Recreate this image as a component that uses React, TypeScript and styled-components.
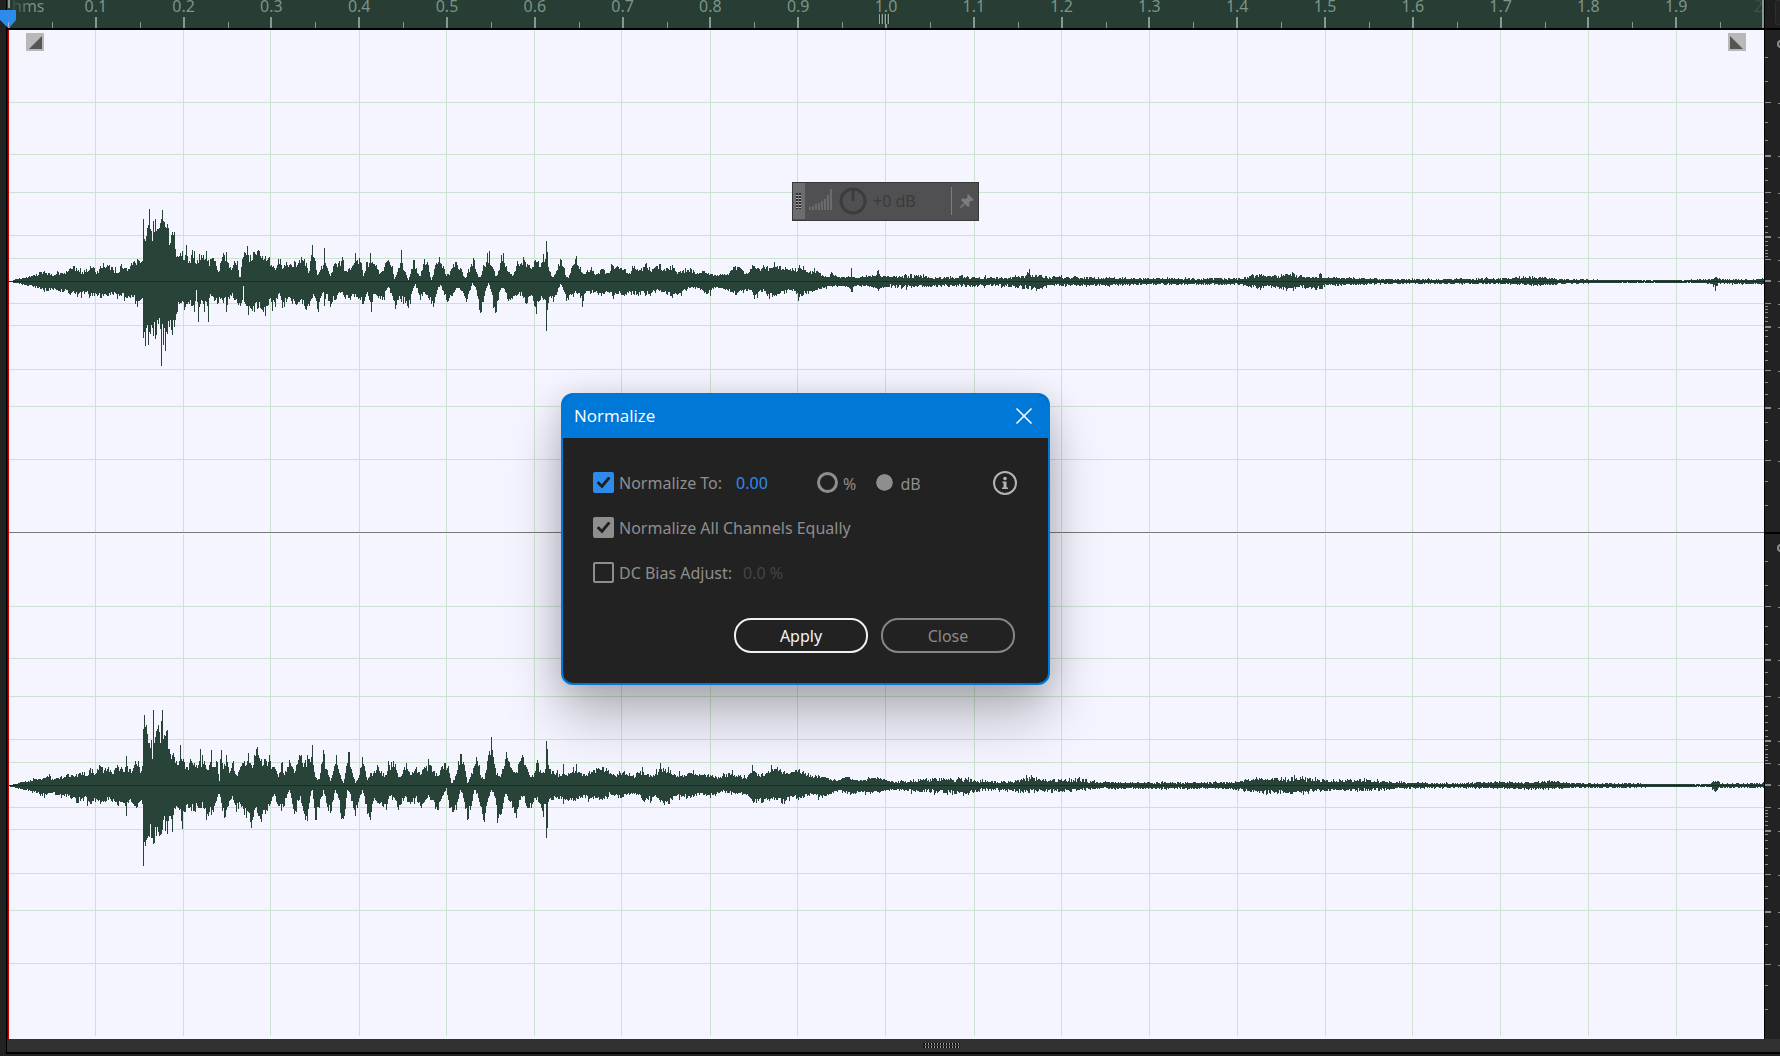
import React from "react";
import styled, { createGlobalStyle } from "styled-components";

const sans = `"Noto Sans", "Open Sans", sans-serif`;

const GlobalStyle = createGlobalStyle`
  *, *::before, *::after { box-sizing: border-box; }
  body { margin: 0; background: #222222; }
  button, input { font: inherit; margin: 0; padding: 0; }
`;

/* ---------- audio envelopes: "x:height" pairs, in pixels ---------- */

const parse = (s: string): number[][] =>
  s.trim().split(/[\s,]+/).map((p) => p.split(":").map(Number));

const leftUp = parse(`8:0,12:0,16:2,22:3,28:4,34:6,40:9,44:10,48:8,54:6,58:9,62:8,66:10,70:13,74:15,78:11,82:9,86:12,90:15,94:13,96:7,100:15,104:14,108:15,112:14,117:8,121:17,126:13,130:15,134:20,137:22,140:18,142:20,143:62,144:42,147:53,148:56,149:72,150:52,151:50,153:60,155:62,157:52,160:58,161:62,162:71,163:60,164:59,166:53,168:53,170:38,172:49,174:49,175:32,178:24,180:28,182:30,185:26,186:36,187:25,189:20,192:31,195:18,199:27,203:26,206:30,207:20,211:22,215:20,218:9,222:24,224:26,227:19,230:14,234:20,237:20,239:4,240:4,242:22,245:28,246:26,247:35,248:26,250:26,254:29,257:30,262:25,265:25,269:24,272:14,275:11,278:22,280:22,282:12,286:19,290:17,294:20,298:18,301:24,304:22,306:18,308:8,310:20,311:26,312:36,313:24,315:20,317:6,321:15,323:16,324:33,325:18,326:15,330:5,334:17,338:18,341:20,345:10,349:13,352:15,354:18,355:28,356:20,358:17,361:18,363:5,367:19,369:18,370:28,371:18,376:16,379:7,382:10,385:18,388:21,392:15,394:2,398:13,400:18,401:31,402:18,404:10,408:1,411:12,414:21,417:8,420:5,424:22,427:19,431:1,435:16,439:24,443:15,446:5,450:10,455:19,460:13,465:3,470:14,473:23,477:7,480:4,484:15,487:28,488:18,489:30,490:16,492:14,496:5,500:18,502:20,503:28,504:18,506:15,510:7,513:6,517:20,521:18,523:24,527:17,531:12,534:20,538:20,541:18,543:27,545:22,546:40,547:29,548:14,549:10,552:4,556:10,560:22,563:14,566:4,568:3,572:15,575:22,579:12,583:7,590:11,596:7,602:12,608:8,612:16,618:14,624:12,630:7,634:15,640:11,646:18,650:10,655:14,659:17,664:12,670:15,676:9,682:10,690:13,696:7,702:10,708:8,714:6,720:7,726:6,730:10,735:15,741:12,746:8,753:15,759:12,764:14,770:13,774:19,779:15,785:14,790:12,796:9,799:16,805:11,812:10,818:9,822:6,828:4,831:9,838:4,844:4,848:5,850:4,851:13,852:4,861:4,868:5,875:5,878:11,880:5,890:5,910:7,930:4,960:5,990:4,1010:4,1026:6,1028:12,1030:7,1050:5,1070:4,1100:4,1150:3,1200:3,1240:3,1256:8,1270:5,1290:9,1300:6,1318:4,1320:10,1323:4,1340:4,1400:2,1440:2,1500:3,1540:5,1560:2,1580:2,1620:1,1680:1,1711:2,1715:5,1720:2,1755:2,1764:3`);

const leftDown = parse(`8:0,16:1,24:3,32:4,40:7,46:9,52:7,58:9,62:10,66:8,70:13,74:11,78:12,84:12,88:12,92:14,98:13,101:16,104:12,108:14,112:12,117:17,121:14,126:16,130:16,136:19,140:18,142:16,143:56,144:50,145:64,146:46,147:43,150:52,152:46,155:57,158:42,160:47,161:84,162:42,163:63,164:46,165:69,166:50,167:52,170:38,172:53,174:45,176:32,179:22,184:28,188:20,192:24,194:30,196:8,197:20,198:40,199:25,203:22,204:30,206:20,207:24,208:40,209:16,210:12,214:19,218:21,222:18,227:23,230:13,234:18,240:24,242:18,243:4,244:20,247:24,248:33,249:24,254:30,257:27,261:27,265:34,267:24,271:20,275:25,278:12,284:25,288:15,292:22,297:22,300:18,306:28,308:22,312:16,314:14,318:30,320:16,323:10,324:24,326:12,330:25,334:18,340:11,345:17,350:18,354:15,360:18,363:22,366:12,370:20,371:30,373:12,378:16,382:18,388:5,392:14,395:27,398:18,402:14,408:26,411:12,415:2,420:18,424:10,429:18,433:25,437:8,440:3,442:8,447:20,452:14,456:6,460:8,466:20,470:8,472:1,476:8,479:28,481:30,484:14,488:1,491:10,493:26,496:30,499:10,503:6,508:19,512:17,518:12,523:16,526:22,530:14,535:25,540:18,545:18,546:49,547:28,549:15,553:20,557:10,560:2,564:10,568:18,572:12,577:12,583:19,587:9,590:12,594:10,601:14,606:9,612:14,618:12,624:14,630:10,636:13,644:11,650:14,656:8,662:10,670:14,680:11,690:6,700:8,707:12,715:6,724:7,735:13,742:8,750:8,754:17,758:10,765:9,772:15,780:11,790:8,799:15,806:12,812:10,820:7,830:4,840:4,848:5,851:10,854:4,870:4,878:9,884:5,910:7,930:5,960:5,1000:4,1020:7,1040:8,1050:4,1100:4,1150:3,1200:3,1240:3,1256:7,1270:5,1290:10,1300:6,1320:8,1325:4,1360:3,1400:2,1500:2,1540:4,1560:2,1620:1,1700:1,1711:2,1715:7,1718:2,1755:2,1764:3`);

const rightUp = parse(`8:0,16:1,20:3,28:4,34:6,40:6,47:9,52:6,60:8,66:10,72:10,78:11,84:13,86:9,90:17,95:11,99:20,104:15,108:18,112:11,117:20,122:16,125:18,126:29,127:19,132:14,135:24,139:18,141:14,142:19,143:56,144:70,145:58,146:60,148:42,151:45,152:26,153:75,154:42,155:48,158:60,160:42,161:64,162:75,163:46,164:50,167:55,169:36,173:32,177:20,179:24,180:40,181:26,183:26,187:18,190:26,194:22,199:24,200:36,201:18,202:30,205:20,209:20,211:35,212:18,214:18,216:24,219:4,220:26,221:35,223:16,226:30,229:12,233:24,236:10,242:22,247:24,248:32,249:22,251:20,254:30,256:36,257:38,258:30,261:26,265:26,270:24,275:16,278:8,281:22,284:10,289:25,294:12,299:30,301:30,304:22,308:26,311:28,312:40,313:20,316:7,319:6,323:35,326:16,330:4,332:10,336:30,339:12,343:2,345:12,348:33,351:16,355:2,359:10,362:28,365:14,367:5,370:12,373:12,377:20,381:14,385:10,389:20,393:24,397:12,400:8,406:22,410:10,416:18,420:10,424:18,429:20,434:14,438:9,441:18,445:22,449:12,451:2,454:5,458:24,461:31,464:20,467:2,470:8,476:28,480:10,484:6,489:34,492:35,496:10,500:8,506:33,510:18,515:12,522:30,526:18,530:8,535:14,538:22,541:12,545:16,546:44,547:36,548:20,550:16,556:12,560:9,562:11,563:21,564:11,568:12,573:18,580:12,586:10,592:13,596:17,602:18,608:15,614:10,624:14,632:9,640:14,650:10,658:13,660:22,662:13,668:18,675:10,682:10,690:12,700:10,710:10,720:8,728:12,738:10,745:7,750:12,752:20,754:14,758:11,766:12,777:18,784:14,790:12,799:16,805:12,815:10,822:8,830:6,838:5,848:8,855:5,865:5,877:8,885:5,900:4,930:7,960:7,980:5,990:4,1010:4,1028:8,1050:6,1075:7,1090:4,1120:3,1150:3,1200:3,1225:3,1240:5,1260:7,1300:8,1330:6,1370:5,1400:3,1450:2,1500:4,1520:3,1555:4,1580:2,1620:2,1680:1,1710:1,1714:5,1718:5,1720:2,1764:2`);

const rightDown = parse(`8:0,20:3,28:5,36:7,42:10,50:7,58:9,64:10,70:12,77:17,84:11,91:18,97:14,103:16,108:14,114:15,118:20,122:16,125:20,126:30,127:16,134:20,136:22,141:14,142:18,143:80,144:56,145:60,148:50,151:52,153:58,156:50,158:46,161:48,163:34,165:45,167:48,169:30,172:46,174:22,178:22,181:35,184:26,188:22,194:25,198:22,205:22,208:30,213:26,216:15,219:8,222:25,224:32,228:20,232:10,236:26,240:18,246:32,248:26,251:42,254:24,258:30,261:36,265:28,270:18,274:8,278:20,284:20,289:4,291:12,294:28,300:10,304:28,307:35,310:10,312:4,315:34,319:22,323:4,328:25,331:25,335:4,338:12,341:33,344:30,347:4,349:6,355:30,359:12,362:4,367:28,370:34,374:12,379:18,386:24,390:10,394:12,398:24,404:12,410:18,415:12,421:22,427:12,432:14,438:24,442:10,446:2,449:22,452:26,456:24,460:4,463:12,467:34,470:24,474:4,478:12,484:36,488:12,491:4,494:10,498:32,501:28,505:8,510:16,516:32,520:14,523:10,526:20,531:22,535:12,540:18,543:31,545:18,546:52,547:42,548:16,556:12,568:15,573:15,580:12,590:12,602:14,610:8,620:12,630:8,638:9,644:16,654:10,660:16,668:18,675:10,690:12,705:8,715:10,722:6,735:8,745:8,754:16,763:16,774:14,784:18,790:10,800:12,812:8,822:12,830:8,840:4,850:9,860:6,870:8,890:4,910:6,930:7,970:8,985:4,1000:5,1020:7,1040:6,1070:6,1090:3,1150:3,1220:3,1240:5,1260:8,1290:8,1310:6,1340:5,1370:5,1400:3,1450:2,1500:3,1540:4,1580:2,1620:2,1680:1,1710:1,1714:7,1718:4,1720:2,1764:2`);

const ORIGIN = 7;
const LANE_W = 1757;
const LANE_H = 502;
const ZERO = 251;

const sample = (env: number[][], x: number) => {
  let i = 1;
  while (i < env.length - 1 && env[i][0] < x) i++;
  const [x0, a] = env[i - 1];
  const [x1, b] = env[i];
  return a + ((b - a) * (x - x0)) / (x1 - x0);
};

const hasKey = (env: number[][], x: number) => env.some((p) => p[0] === x);

const buildWave = (up: number[][], down: number[][], start: number) => {
  let seed = start;
  const rnd = () => (seed = (seed * 16807) % 2147483647) / 2147483647;
  const jitter = (env: number[][], x: number) => {
    const v = sample(env, x);
    const r = rnd();
    const spike = rnd() > 0.9 ? 1.3 : 1;
    if (hasKey(env, x) && x < 890) return Math.round(v);
    const k = x < 890 ? 0.72 + r * 0.36 : 0.45 + r * 0.6;
    return Math.round(v * k * spike);
  };
  let d = "";
  for (let x = 9; x < 1764; x++) {
    const u = jitter(up, x);
    const l = jitter(down, x);
    d += `M${x - ORIGIN} ${ZERO - u}h1v${u + l + 1}h-1z`;
  }
  return d;
};

const gridX = [95, 183, 270, 359, 446, 534, 621, 710, 797, 885, 974, 1061, 1149, 1237, 1325, 1412, 1500, 1588, 1676];
const gridY = [-179, -127, -89, -46, -23, 22, 44, 88, 125, 178];

/* ---------- shell ---------- */

const Shell = styled.main`
  position: relative;
  display: flex;
  flex-direction: column;
  height: 100vh;
  padding-left: 6px;
  overflow: hidden;
  background: #222222;
  font-family: ${sans};
  font-size: 16px;
`;

const Editor = styled.div`
  display: grid;
  grid-template-columns: 1fr 16px;
  grid-template-rows: 30px 1fr;
  flex: 1;
  min-height: 0;
  border-left: 1px solid #000;
`;

const Ruler = styled.div`
  display: grid;
  grid-template-columns: 1fr repeat(19, 2fr) 1fr;
  padding-left: 1px;
  background: #283d34;
  border-bottom: 2px solid #000;
  color: #7b9488;
  line-height: 12px;
`;

const tick = "linear-gradient(#829a8f, #829a8f)";

const RulerCell = styled.div`
  text-align: center;
  background: ${tick} left bottom / 1px 6px no-repeat, ${tick} center bottom / 2px 11px no-repeat;
`;

const RulerStart = styled.div`
  padding-left: 4px;
  background: ${tick} left top / 2px 8px no-repeat, ${tick} left bottom / 2px 6px no-repeat;
  span { mask-image: linear-gradient(90deg, rgba(0, 0, 0, 0.15), #000 60%); }
`;

const RulerEnd = styled.div`
  text-align: right;
  white-space: nowrap;
  background: ${tick} left bottom / 1px 6px no-repeat, ${tick} right bottom / 2px 28px no-repeat;
  span { opacity: 0.25; margin-right: 1px; }
`;

const Corner = styled.div`
  padding: 0 0 3px 10px;
  background: #1e1e1e;
  border-left: 1px solid #000;
  border-bottom: 2px solid #000;
  overflow: hidden;
  &::before {
    content: "";
    display: block;
    width: 12px;
    height: 25px;
    border: 1px solid #2e2e2e;
    border-radius: 3px;
    background: #222;
  }
`;

const Tracks = styled.div`
  position: relative;
  display: flex;
  flex-direction: column;
  min-height: 0;
  padding-bottom: 3px;
  background: #f4f5ff;
`;

const Lane = styled.svg`
  display: block;
  flex: 1;
  width: 100%;
  min-height: 0;
`;

const Divider = styled.div`
  height: 2px;
  border-top: 1px solid #77787c;
`;

const ScaleColumn = styled.div`
  display: flex;
  flex-direction: column;
  min-height: 0;
  padding-bottom: 3px;
  border-left: 1px solid #000;
  background: #222222;
`;

const ScaleDivider = styled.div`
  height: 2px;
  background: #000;
`;

const Footer = styled.div`
  display: flex;
  justify-content: center;
  align-items: flex-start;
  height: 15px;
  padding: 4px 0 0 95px;
  background: #313131;
  border-left: 1px solid #000;
  border-bottom: 2px solid #000;
`;

const Grip = styled.div`
  width: 37px;
  height: 5px;
  background:
    linear-gradient(#313131, #313131) 0 2px / 100% 1px no-repeat,
    repeating-linear-gradient(90deg, #141414 0 2px, #a0a0a0 2px 3px);
`;

const Base = styled.div`
  height: 2px;
`;

/* ---------- overlays on the tracks ---------- */

const PlayLine = styled.div`
  position: absolute;
  inset: 0 auto 0 0;
  width: 2px;
  border-left: 1px solid #5c0000;
  background: #c40000;
`;

const PlayHead = styled.svg`
  position: absolute;
  left: 0;
  top: 10px;
`;

const RulerGrip = styled.div`
  position: absolute;
  left: 879px;
  top: 14px;
  width: 11px;
  height: 10px;
  background: repeating-linear-gradient(90deg, #9aa6a0 0 1px, #1d2b25 1px 2px, #4b5d54 2px 3px);
`;

const FadeHandle = styled.button<{ $side: "left" | "right" }>`
  position: absolute;
  top: 3px;
  ${(p) => p.$side}: ${(p) => (p.$side === "left" ? 19 : 18)}px;
  width: 18px;
  height: 18px;
  border: 0;
  background: #b8b8b8;
  svg { display: block; }
`;

const Hud = styled.div`
  position: absolute;
  left: 792px;
  top: 182px;
  display: flex;
  align-items: center;
  width: 187px;
  height: 39px;
  padding-bottom: 1px;
  background: #4b4b4df8;
  border: 1px solid #39393b;
  color: #3a3a3c;
`;

const HudHandle = styled.div`
  display: grid;
  justify-content: start;
  align-content: center;
  align-self: stretch;
  width: 12px;
  padding-left: 3px;
  background: #6d6d6f;
  &::before {
    content: "";
    width: 5px;
    height: 16px;
    background:
      linear-gradient(#6d6d6f, #6d6d6f) center / 1px 100% no-repeat,
      repeating-linear-gradient(#2c2c2c 0 2px, #b5b5b5 2px 3px);
  }
`;

const HudLevel = styled.svg`
  margin: 0 6px 4px 4px;
`;

const HudValue = styled.span`
  flex: 1;
  padding-left: 6px;
`;

const HudRule = styled.div`
  width: 1px;
  height: 28px;
  margin-right: 8px;
  background: #7c7c7e;
`;

const HudPin = styled.button`
  width: 14px;
  height: 16px;
  margin-right: 4px;
  border: 0;
  background: none;
  svg { display: block; }
`;

/* ---------- dialog ---------- */

const Dialog = styled.section`
  position: absolute;
  left: 561px;
  top: 393px;
  width: 489px;
  border: 2px solid #0078d7;
  border-radius: 12px;
  overflow: hidden;
  background: #222222;
  box-shadow: 0 32px 56px rgba(0, 0, 0, 0.26), 0 4px 32px rgba(0, 0, 0, 0.14);
`;

const TitleBar = styled.header`
  display: flex;
  align-items: center;
  justify-content: space-between;
  height: 43px;
  padding: 0 16px 1px 11px;
  background: #0078d7;
  color: #fff;
`;

const Title = styled.h1`
  margin: 0;
  font: 400 17px/24px "Open Sans", "Noto Sans", sans-serif;
`;

const CloseX = styled.button`
  width: 16px;
  height: 16px;
  border: 0;
  background: none;
  svg { display: block; }
`;

const Body = styled.form`
  padding: 22px 31px 30px 30px;
  color: #8e8e8e;
`;

const Row = styled.div`
  display: flex;
  align-items: center;
  height: 45px;
`;

const Option = styled.label`
  display: flex;
  align-items: center;
  gap: 5px;
`;

const Check = styled.input<{ $tone?: string }>`
  appearance: none;
  display: grid;
  place-items: center;
  width: 21px;
  height: 21px;
  border: 2px solid #8e8e8e;
  border-radius: 2px;
  &:checked {
    border-color: ${(p) => p.$tone};
    background: ${(p) => p.$tone};
  }
  &:checked::before {
    content: "";
    width: 14px;
    height: 12px;
    background: #1f1f1f;
    clip-path: polygon(0 54%, 16% 40%, 38% 64%, 84% 0, 100% 14%, 40% 100%);
  }
`;

const ValueField = styled.input<{ $gap: number }>`
  width: 68px;
  margin-left: ${(p) => p.$gap}px;
  border: 0;
  background: none;
  color: #2d8ceb;
  &:disabled { color: #454545; }
`;

const RadioOption = styled.label`
  display: flex;
  align-items: center;
  gap: 5px;
  margin: 0 18px 0 13px;
  & + & { margin: 0; }
  span { padding-top: 3px; }
`;

const Radio = styled.input`
  appearance: none;
  width: 21px;
  height: 21px;
  border: 3px solid #8e8e8e;
  border-radius: 50%;
  &:checked {
    border: 2px solid #222222;
    background: #8e8e8e;
    background-clip: padding-box;
  }
`;

const InfoButton = styled.button`
  width: 24px;
  height: 24px;
  margin-left: auto;
  border: 0;
  background: none;
  svg { display: block; }
`;

const Actions = styled.div`
  display: flex;
  justify-content: flex-end;
  gap: 13px;
  padding: 23px 2px 0 0;
`;

const PillButton = styled.button<{ $primary?: boolean }>`
  width: 134px;
  height: 35px;
  border: 2px solid ${(p) => (p.$primary ? "#f0f0f0" : "#858585")};
  border-radius: 17px;
  background: none;
  color: ${(p) => (p.$primary ? "#f4f4f4" : "#8a8a8a")};
`;

/* ---------- parts ---------- */

const WaveLane = ({ up, down, seed }: { up: number[][]; down: number[][]; seed: number }) => (
  <Lane viewBox={`0 0 ${LANE_W} ${LANE_H}`} preserveAspectRatio="none" shapeRendering="crispEdges">
    {gridX.map((x) => (
      <rect key={x} x={x - ORIGIN} y={0} width={1} height={LANE_H} fill="#cde3cf" />
    ))}
    {gridY.map((y) => (
      <rect key={y} x={0} y={ZERO + y} width={LANE_W} height={1} fill="#cde3cf" />
    ))}
    <path d={buildWave(up, down, seed)} fill="#284338" />
    <rect x={0} y={ZERO} width={LANE_W} height={1} fill="#1a2c23" />
  </Lane>
);

const majors = [22, 45, 89, 126, 179];
const minors = [25, 28, 31, 36, 40, 49, 55, 63, 70, 79, 101, 113, 141, 159, 200, 224];

const ScaleLane = () => (
  <Lane viewBox={`0 0 15 ${LANE_H}`} preserveAspectRatio="none" shapeRendering="crispEdges" fill="#8c8c8c">
    <rect x={0} y={ZERO - 1} width={6} height={2} />
    <rect x={13} y={ZERO} width={2} height={1} />
    {[-1, 1].map((s) => (
      <g key={s}>
        {majors.map((m, i) => (
          <React.Fragment key={m}>
            <rect x={0} y={ZERO + s * m} width={6} height={i % 2 ? 2 : 1} />
            <rect x={13} y={ZERO + s * m + 1} width={2} height={1} />
          </React.Fragment>
        ))}
        {minors.map((m) => (
          <rect key={m} x={0} y={ZERO + s * m} width={3} height={1} />
        ))}
      </g>
    ))}
    <circle cx={16} cy={14} r={3} fill="none" stroke="#8c8c8c" strokeWidth={2} shapeRendering="auto" />
  </Lane>
);

const labels = Array.from({ length: 19 }, (_, i) => ((i + 1) / 10).toFixed(1));

export default function App() {
  return (
    <>
      <GlobalStyle />
      <Shell>
        <Editor>
          <Ruler>
            <RulerStart><span>hms</span></RulerStart>
            {labels.map((l) => (
              <RulerCell key={l}>{l}</RulerCell>
            ))}
            <RulerEnd><span>2</span></RulerEnd>
          </Ruler>
          <Corner />
          <Tracks>
            <WaveLane up={leftUp} down={leftDown} seed={7411} />
            <Divider />
            <WaveLane up={rightUp} down={rightDown} seed={2909} />
            <PlayLine />
            <FadeHandle $side="left" type="button" aria-label="Fade in">
              <svg width="18" height="18"><path d="M16 3v13H3z" fill="#555" /></svg>
            </FadeHandle>
            <FadeHandle $side="right" type="button" aria-label="Fade out">
              <svg width="18" height="18"><path d="M2 3v13h13z" fill="#555" /></svg>
            </FadeHandle>
          </Tracks>
          <ScaleColumn>
            <ScaleLane />
            <ScaleDivider />
            <ScaleLane />
          </ScaleColumn>
        </Editor>
        <Footer><Grip /></Footer>
        <Base />

        <RulerGrip />
        <PlayHead width="16" height="17" viewBox="0 0 16 17">
          <path d="M0 0h16v10l-6 7H7L0 10z" fill="#2d8ceb" />
          <path d="M8.500 12v5" stroke="#9fb0c0" strokeWidth="1" />
        </PlayHead>

        <Hud>
          <HudHandle />
          <HudLevel width="24" height="22" fill="#6b6b6d">
            {[3, 4, 6, 7, 9, 11, 15, 21].map((h, i) => (
              <rect key={i} x={i * 3} y={22 - h} width={2} height={h} />
            ))}
          </HudLevel>
          <svg width="28" height="28" fill="none" stroke="#3c3c3e" strokeWidth="3">
            <circle cx="14" cy="14" r="12" />
            <path d="M14 3v11" />
          </svg>
          <HudValue>+0 dB</HudValue>
          <HudRule />
          <HudPin type="button" aria-label="Pin">
            <svg width="14" height="14" viewBox="0 0 14 14" fill="#7c7c7e">
              <path d="M8 0l6 6-2 1-1-.5L9 9l.5 3L8 13 5 10l-4 4-1-1 4-4-3-3 1.500-1.500L5.500 5 8 3 7 2z" />
            </svg>
          </HudPin>
        </Hud>

        <Dialog role="dialog" aria-labelledby="dialog-title">
          <TitleBar>
            <Title id="dialog-title">Normalize</Title>
            <CloseX type="button" aria-label="Close dialog">
              <svg width="16" height="16" stroke="#fff" strokeWidth="1.500">
                <path d="M.5 .5l15 15M15.500 .5l-15 15" />
              </svg>
            </CloseX>
          </TitleBar>
          <Body onSubmit={(e) => e.preventDefault()}>
            <Row>
              <Option>
                <Check type="checkbox" defaultChecked $tone="#2d8ceb" />
                Normalize To:
              </Option>
              <ValueField $gap={14} aria-label="Normalize level" defaultValue="0.00" />
              <RadioOption>
                <Radio type="radio" name="unit" />
                <span>%</span>
              </RadioOption>
              <RadioOption>
                <Radio type="radio" name="unit" defaultChecked />
                <span>dB</span>
              </RadioOption>
              <InfoButton type="button" aria-label="Information">
                <svg width="24" height="24" fill="#b4b4b4">
                  <circle cx="12" cy="12" r="11" fill="none" stroke="#b4b4b4" strokeWidth="2" />
                  <circle cx="12" cy="7.500" r="1.800" />
                  <path d="M9.500 10.500h4v6h1.500v1.500h-6v-1.500h1.500v-4.500h-1z" />
                </svg>
              </InfoButton>
            </Row>
            <Row>
              <Option>
                <Check type="checkbox" defaultChecked $tone="#8e8e8e" />
                Normalize All Channels Equally
              </Option>
            </Row>
            <Row>
              <Option>
                <Check type="checkbox" />
                DC Bias Adjust:
              </Option>
              <ValueField $gap={11} aria-label="DC bias" defaultValue="0.0 %" disabled />
            </Row>
            <Actions>
              <PillButton type="submit" $primary>Apply</PillButton>
              <PillButton type="button">Close</PillButton>
            </Actions>
          </Body>
        </Dialog>
      </Shell>
    </>
  );
}
